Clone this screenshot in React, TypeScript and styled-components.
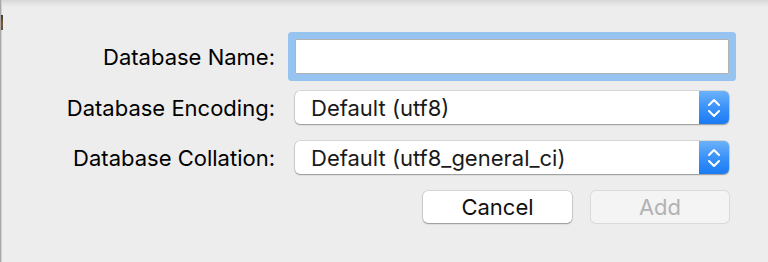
import React from 'react';
import styled, { createGlobalStyle } from 'styled-components';

const GlobalStyle = createGlobalStyle`
  html, body {
    margin: 0;
    padding: 0;
    background: #ededed;
  }
  * {
    box-sizing: border-box;
  }
`;

const Sheet = styled.div`
  position: relative;
  width: 768px;
  height: 262px;
  background: linear-gradient(#d6d6d6 0, #e2e2e2 3px, #ebebeb 6px, #ededed 8px);
  border-left: 1px solid #a9a9a9;
  box-shadow: inset 1px 0 0 #d0d0d0;
  font-family: Inter, 'Liberation Sans', sans-serif;
  overflow: hidden;

  &::before {
    content: '';
    position: absolute;
    left: -1px;
    top: 15px;
    width: 3px;
    height: 15px;
    background: linear-gradient(#3a3a3a, #8a5a2a 60%, #505050);
  }
`;

const Form = styled.div`
  display: grid;
  grid-template-columns: 274px 434px;
  column-gap: 20px;
  row-gap: 17px;
  padding-top: 39px;
  align-items: center;
`;

const Label = styled.label`
  text-align: right;
  font-size: 22px;
  color: #000;
  white-space: nowrap;
`;

const NameInput = styled.input`
  width: 434px;
  height: 35px;
  margin: 0;
  border: 1px solid #b3b3b3;
  border-radius: 1px;
  background: #fff;
  box-shadow: 0 0 0 7px #96c3f0;
  outline: none;
  font: inherit;
  font-size: 22px;
  padding: 0 8px;
`;

const Select = styled.div`
  display: flex;
  height: 33px;
  border-radius: 5px;
  background: #fff;
  box-shadow: 0 0 0 0.5px rgba(0, 0, 0, 0.18), 0 1px 1.5px rgba(0, 0, 0, 0.3);
  overflow: hidden;
`;

const SelectValue = styled.span`
  flex: 1;
  display: flex;
  align-items: center;
  padding-left: 16px;
  font-size: 22px;
  color: #1a1a1a;
  white-space: nowrap;
`;

const Stepper = styled.span`
  width: 30px;
  display: flex;
  align-items: center;
  justify-content: center;
  background: linear-gradient(#6cb2fb, #3b92f8 50%, #1a7bf4);
`;

const Buttons = styled.div`
  grid-column: 2;
  display: flex;
  justify-content: flex-end;
  gap: 19px;
`;

const Button = styled.button<{ $width: number; $disabled?: boolean }>`
  width: ${({ $width }) => $width}px;
  height: 32px;
  padding: 0;
  border: none;
  border-radius: 5px;
  font-family: inherit;
  font-size: 22px;
  background: ${({ $disabled }) => ($disabled ? '#f4f4f4' : '#fff')};
  color: ${({ $disabled }) => ($disabled ? '#b2b2b2' : '#111')};
  box-shadow: ${({ $disabled }) =>
    $disabled
      ? '0 0 0 1px #dadada'
      : '0 0 0 0.5px rgba(0, 0, 0, 0.2), 0 1px 1.5px rgba(0, 0, 0, 0.3)'};
`;

function Chevrons() {
  return (
    <svg width='14' height='22' viewBox='0 0 14 22' fill='none'>
      <path
        d='M2 8 L7 3 L12 8 M2 14 L7 19 L12 14'
        stroke='#fff'
        strokeWidth='2'
        strokeLinecap='round'
        strokeLinejoin='round'
      />
    </svg>
  );
}

function PopUp({ value }: { value: string }) {
  return (
    <Select>
      <SelectValue>{value}</SelectValue>
      <Stepper>
        <Chevrons />
      </Stepper>
    </Select>
  );
}

export default function App() {
  return (
    <>
      <GlobalStyle />
      <Sheet>
        <Form>
          <Label>Database Name:</Label>
          <NameInput autoFocus />
          <Label>Database Encoding:</Label>
          <PopUp value='Default (utf8)' />
          <Label>Database Collation:</Label>
          <PopUp value='Default (utf8_general_ci)' />
          <Buttons>
            <Button $width={149}>Cancel</Button>
            <Button $width={138} $disabled disabled>
              Add
            </Button>
          </Buttons>
        </Form>
      </Sheet>
    </>
  );
}
